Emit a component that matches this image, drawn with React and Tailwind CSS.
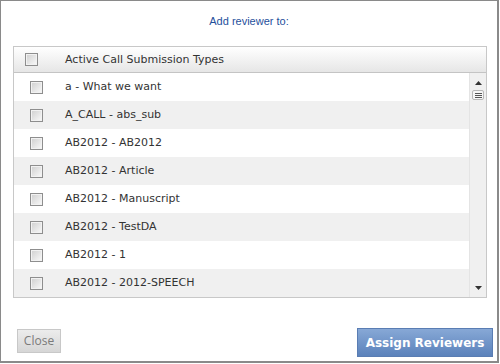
const rows = [
  "a - What we want",
  "A_CALL - abs_sub",
  "AB2012 - AB2012",
  "AB2012 - Article",
  "AB2012 - Manuscript",
  "AB2012 - TestDA",
  "AB2012 - 1",
  "AB2012 - 2012-SPEECH",
];

const Box = () => (
  <span className="block w-[13px] h-[13px] border border-[#8e8e8e] bg-gradient-to-br from-[#cfcfcf] to-[#fafafa] shadow-[inset_0_0_0_1px_#f2f2f2]" />
);

const App = () => {
  return (
    <div className="w-[500px] h-[364px] bg-white" style={{ fontFamily: "'DejaVu Sans', Verdana, sans-serif" }}>
      <div className="w-[499px] h-[363px] border border-[#8a8a8a] border-r-2 border-b-2 flex flex-col">
        {/* title */}
        <div className="h-[45px] pt-[12px] text-center text-[11px] text-[#1f4f9c]" style={{ fontFamily: "'Liberation Sans', Arial, sans-serif" }}>
          Add reviewer to:
        </div>

        {/* table */}
        <div className="mx-[12px] w-[474px] border border-[#c8c8c8] text-[11px] text-[#333]">
          <div className="h-[26px] flex items-center border-b border-[#c4c4c4] bg-gradient-to-b from-white to-[#e6e6e6]">
            <div className="w-[51px] pl-[11px]">
              <Box />
            </div>
            <span className="pt-px">Active Call Submission Types</span>
          </div>
          <div className="flex h-[224px]">
            <div className="flex-1">
              {rows.map((r, i) => (
                <div
                  key={r}
                  className={`h-[28px] flex items-center ${i % 2 ? "bg-[#f0f0f0]" : "bg-white"}`}
                >
                  <div className="w-[51px] pl-[16px]">
                    <Box />
                  </div>
                  <span className="pt-px">{r}</span>
                </div>
              ))}
            </div>
            {/* scrollbar */}
            <div className="w-[17px] bg-[#f0f0f0] border-l border-[#e4e4e4] flex flex-col items-center">
              <svg width="7" height="4" viewBox="0 0 7 4" className="mt-[8px]">
                <path d="M0 4 L3.5 0 L7 4 Z" fill="#333" />
              </svg>
              <div className="mt-[5px] w-[12px] h-[10px] border border-[#b8b8b8] rounded-[2px] bg-[#f6f6f6] flex flex-col items-center justify-center gap-[1px]">
                <span className="block w-[7px] h-px bg-[#555]" />
                <span className="block w-[7px] h-px bg-[#555]" />
                <span className="block w-[7px] h-px bg-[#555]" />
              </div>
              <div className="flex-1" />
              <svg width="7" height="4" viewBox="0 0 7 4" className="mb-[7px]">
                <path d="M0 0 L7 0 L3.5 4 Z" fill="#333" />
              </svg>
            </div>
          </div>
        </div>

        {/* footer */}
        <div className="flex items-start justify-between pl-[16px] pr-[4px] pt-[31px]">
          <button
            className="w-[44px] h-[24px] border border-[#c8c8c8] bg-gradient-to-b from-[#ececec] to-[#d6d6d6] text-[12px] text-[#7a7a7a]"
            style={{ fontFamily: "'Open Sans', sans-serif" }}
          >
            Close
          </button>
          <button className="-mt-px w-[136px] h-[29px] border border-[#5a7db3] bg-gradient-to-b from-[#87a8d6] to-[#5b82bb] text-white text-[12px] font-bold">
            Assign Reviewers
          </button>
        </div>
      </div>
    </div>
  );
};

export default App;
